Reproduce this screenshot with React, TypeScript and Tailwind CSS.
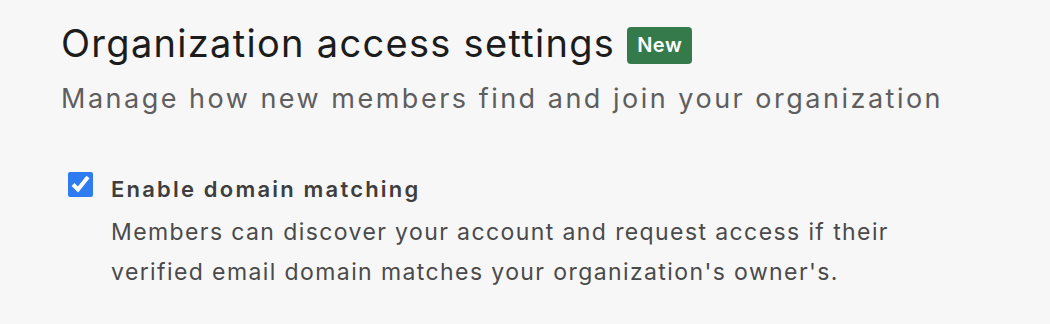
export default function App() {
    return (
        <div className="min-h-[324px] w-full bg-[#f7f7f7] px-[61px] pt-[20px] font-['Inter',sans-serif]">
            <div className="flex items-start gap-[12px]">
                <h1 className="text-[38px] leading-[46px] font-normal tracking-[1.3px] text-[#1c1c1c]">
                    Organization access settings
                </h1>
                <span className="mt-[7px] rounded-[4px] bg-[#357a4b] px-[10px] text-[20px] leading-[37px] font-semibold tracking-[0.5px] text-white">
                    New
                </span>
            </div>
            <p className="mt-[16px] text-[27px] leading-[33px] tracking-[2.5px] text-[#5e5e5e]">
                Manage how new members find and join your organization
            </p>

            <div className="mt-[58px] flex items-start gap-[18px] pl-[7px]">
                <input
                    type="checkbox"
                    defaultChecked
                    className="mt-[-1px] h-[25px] w-[25px] accent-[#2f7bf0]"
                />
                <div>
                    <div className="text-[22px] leading-[32px] font-semibold tracking-[2.2px] text-[#3e3e3e]">
                        Enable domain matching
                    </div>
                    <p className="mt-[7px] max-w-[800px] text-[23px] leading-[40px] tracking-[1.4px] text-[#4a4a4a]">
                        Members can discover your account and request access if their verified email domain matches your organization's owner's.
                    </p>
                </div>
            </div>
        </div>
    );
}
